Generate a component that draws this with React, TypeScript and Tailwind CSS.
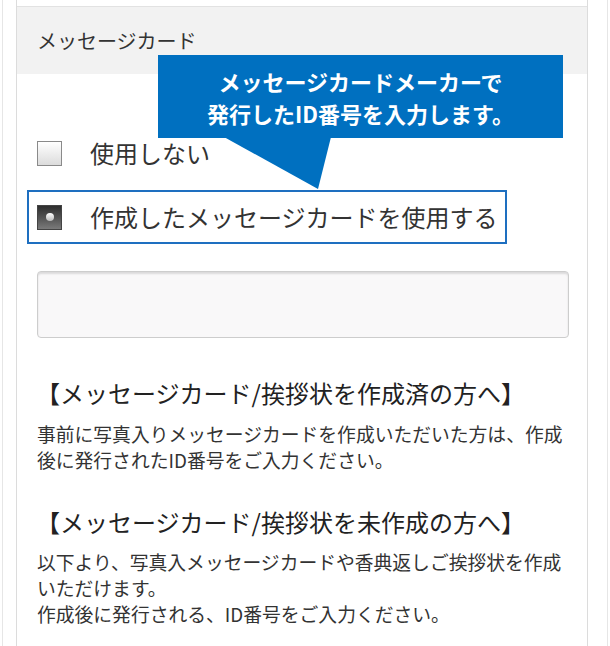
import React from "react";

const font = { fontFamily: '"Noto Sans CJK JP", "Noto Sans", sans-serif' };

function Box({ checked }: { checked?: boolean }) {
  if (checked) {
    return (
      <div className="w-[25px] h-[25px] shrink-0 border border-[#444] bg-gradient-to-b from-[#2e2e2e] to-[#7a7a7a] flex items-center justify-center">
        <div className="w-[8px] h-[8px] rounded-full bg-gradient-to-b from-white to-[#bbb]" />
      </div>
    );
  }
  return (
    <div className="w-[25px] h-[25px] shrink-0 border border-[#8a8a8a] bg-gradient-to-b from-white to-[#dcdcdc]" />
  );
}

export default function App() {
  return (
    <div className="relative w-[610px] h-[646px] bg-white overflow-hidden" style={font}>
      <div className="ml-[2px] w-[606px] h-full border-x border-[#e6e6e6]">
        <div className="ml-[13px] w-[572px] h-full border-x border-[#dcdcdc]">
          <div className="h-[6px]" />
          <div className="h-[68px] border-t border-[#e2e2e2] bg-[#f2f2f2] flex items-center pl-[20px]">
            <span className="text-[20px] text-[#333] leading-none">メッセージカード</span>
          </div>

          <div className="mt-[57px] h-[44px] pl-[20px] flex items-center gap-[28px]">
            <Box />
            <span className="text-[24px] text-[#333] leading-none">使用しない</span>
          </div>

          <div className="mt-[15px] ml-[10px] w-[480px] h-[54px] border-2 border-[#1e6fc0] pl-[8px] flex items-center gap-[28px]">
            <Box checked />
            <span className="text-[24px] text-[#333] leading-none">作成したメッセージカードを使用する</span>
          </div>

          <div className="mt-[27px] ml-[20px] w-[532px] h-[67px] rounded-[4px] border border-[#cdcdcd] bg-[#f9f8f9] shadow-[inset_0_2px_2px_rgba(0,0,0,0.12)]" />

          <div className="mt-[39px] pl-[19px] text-[24px] leading-[32px] text-[#222]">
            【メッセージカード/挨拶状を作成済の方へ】
          </div>
          <p className="mt-[12px] pl-[20px] pr-[14px] text-[18.8px] leading-[26px] text-[#333]">
            事前に写真入りメッセージカードを作成いただいた方は、作成後に発行されたID番号をご入力ください。
          </p>

          <div className="mt-[33px] pl-[19px] text-[24px] leading-[32px] text-[#222]">
            【メッセージカード/挨拶状を未作成の方へ】
          </div>
          <p className="mt-[11px] pl-[20px] pr-[14px] text-[18.8px] leading-[26px] text-[#333]">
            以下より、写真入メッセージカードや香典返しご挨拶状を作成いただけます。
            <br />
            作成後に発行される、ID番号をご入力ください。
          </p>
        </div>
      </div>

      <svg className="absolute left-0 top-0" width="610" height="646" viewBox="0 0 610 646" pointerEvents="none">
        <polygon points="224,137 331,137 318,189" fill="#0070c0" />
      </svg>
      <div className="absolute left-[158px] top-[55px] w-[405px] h-[83px] bg-[#0070c0] flex flex-col items-center justify-center text-white font-bold text-[22px] leading-[32px]">
        <span>メッセージカードメーカーで</span>
        <span>発行したID番号を入力します。</span>
      </div>
    </div>
  );
}
